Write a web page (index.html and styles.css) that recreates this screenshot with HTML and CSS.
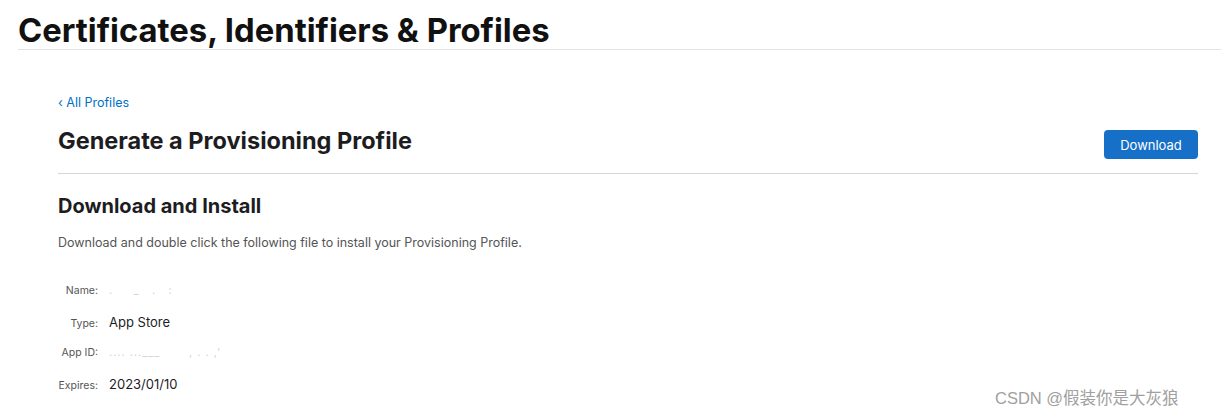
FILE: index.html
```html
<!DOCTYPE html>
<html>
<head>
<meta charset="utf-8">
<link rel="stylesheet" href="styles.css">
</head>
<body>
<header class="top">
  <h1 class="app-title">Certificates, Identifiers &amp; Profiles</h1>
</header>
<main class="content">
  <a class="back" href="#">‹ All Profiles</a>
  <div class="page-head">
    <h2 class="page-title">Generate a Provisioning Profile</h2>
    <button class="btn">Download</button>
  </div>
  <section class="section">
    <h3 class="sec-title">Download and Install</h3>
    <p class="desc">Download and double click the following file to install your Provisioning Profile.</p>
    <dl class="details">
      <div class="row"><dt>Name:</dt><dd class="redacted">. &nbsp; &nbsp; _ &nbsp; . &nbsp; :</dd></div>
      <div class="row"><dt>Type:</dt><dd>App Store</dd></div>
      <div class="row"><dt>App ID:</dt><dd class="redacted">.... ...___ &nbsp; &nbsp; &nbsp; , . . ,'</dd></div>
      <div class="row"><dt>Expires:</dt><dd>2023/01/10</dd></div>
    </dl>
  </section>
</main>
<div class="watermark">CSDN @假装你是大灰狼</div>
</body>
</html>
```
FILE: styles.css
```css
html, body {
  margin: 0;
  padding: 0;
  background: #fff;
}
body {
  font-family: Inter, "Noto Sans", sans-serif;
  color: #1d1d1f;
  width: 1221px;
  height: 417px;
  overflow: hidden;
  position: relative;
}
.top {
  margin-left: 18px;
  border-bottom: 1px solid #e3e3e3;
  height: 49px;
}
.app-title {
  margin: 0;
  padding-top: 10px;
  font-size: 32.8px;
  font-weight: 700;
  letter-spacing: 0;
  line-height: 40px;
  color: #111;
}
.content {
  margin: 0 23px 0 58px;
  display: flex;
  flex-direction: column;
}
.back {
  margin-top: 45px;
  font-size: 12.5px;
  line-height: 16px;
  color: #0070c9;
  text-decoration: none;
}
.page-head {
  display: flex;
  justify-content: space-between;
  align-items: flex-start;
  margin-top: 16px;
  padding-bottom: 14px;
  border-bottom: 1px solid #d6d6d6;
}
.page-title {
  margin: 0;
  font-size: 23.5px;
  font-weight: 700;
  line-height: 28px;
  color: #1d1d1f;
}
.btn {
  font-family: Inter, "Noto Sans", sans-serif;
  width: 94px;
  height: 29px;
  background: #1670c8;
  color: #fff;
  border: none;
  border-radius: 4px;
  font-size: 13px;
  padding: 0;
  margin-top: 3px;
}
.section {
  display: flex;
  flex-direction: column;
}
.sec-title {
  margin: 19px 0 0;
  font-size: 20px;
  font-weight: 700;
  line-height: 26px;
}
.desc {
  margin: 16px 0 0;
  font-size: 12.5px;
  line-height: 16px;
  color: #555;
}
.details {
  margin: 32px 0 0;
  display: flex;
  flex-direction: column;
  gap: 15px;
}
.row {
  display: flex;
  align-items: baseline;
  height: 16px;
}
.row dt {
  width: 40px;
  text-align: right;
  font-size: 10.5px;
  color: #555;
}
.row dd {
  margin: 0 0 0 11px;
  font-size: 13px;
  color: #1d1d1f;
}
.row dd.redacted {
  color: #d4d4d4;
  font-size: 11px;
  letter-spacing: 1px;
}
.watermark {
  position: absolute;
  left: 995px;
  top: 385px;
  font-family: "Liberation Sans", "Noto Sans CJK SC", sans-serif;
  font-size: 16.5px;
  color: #a0a0a0;
}
```
